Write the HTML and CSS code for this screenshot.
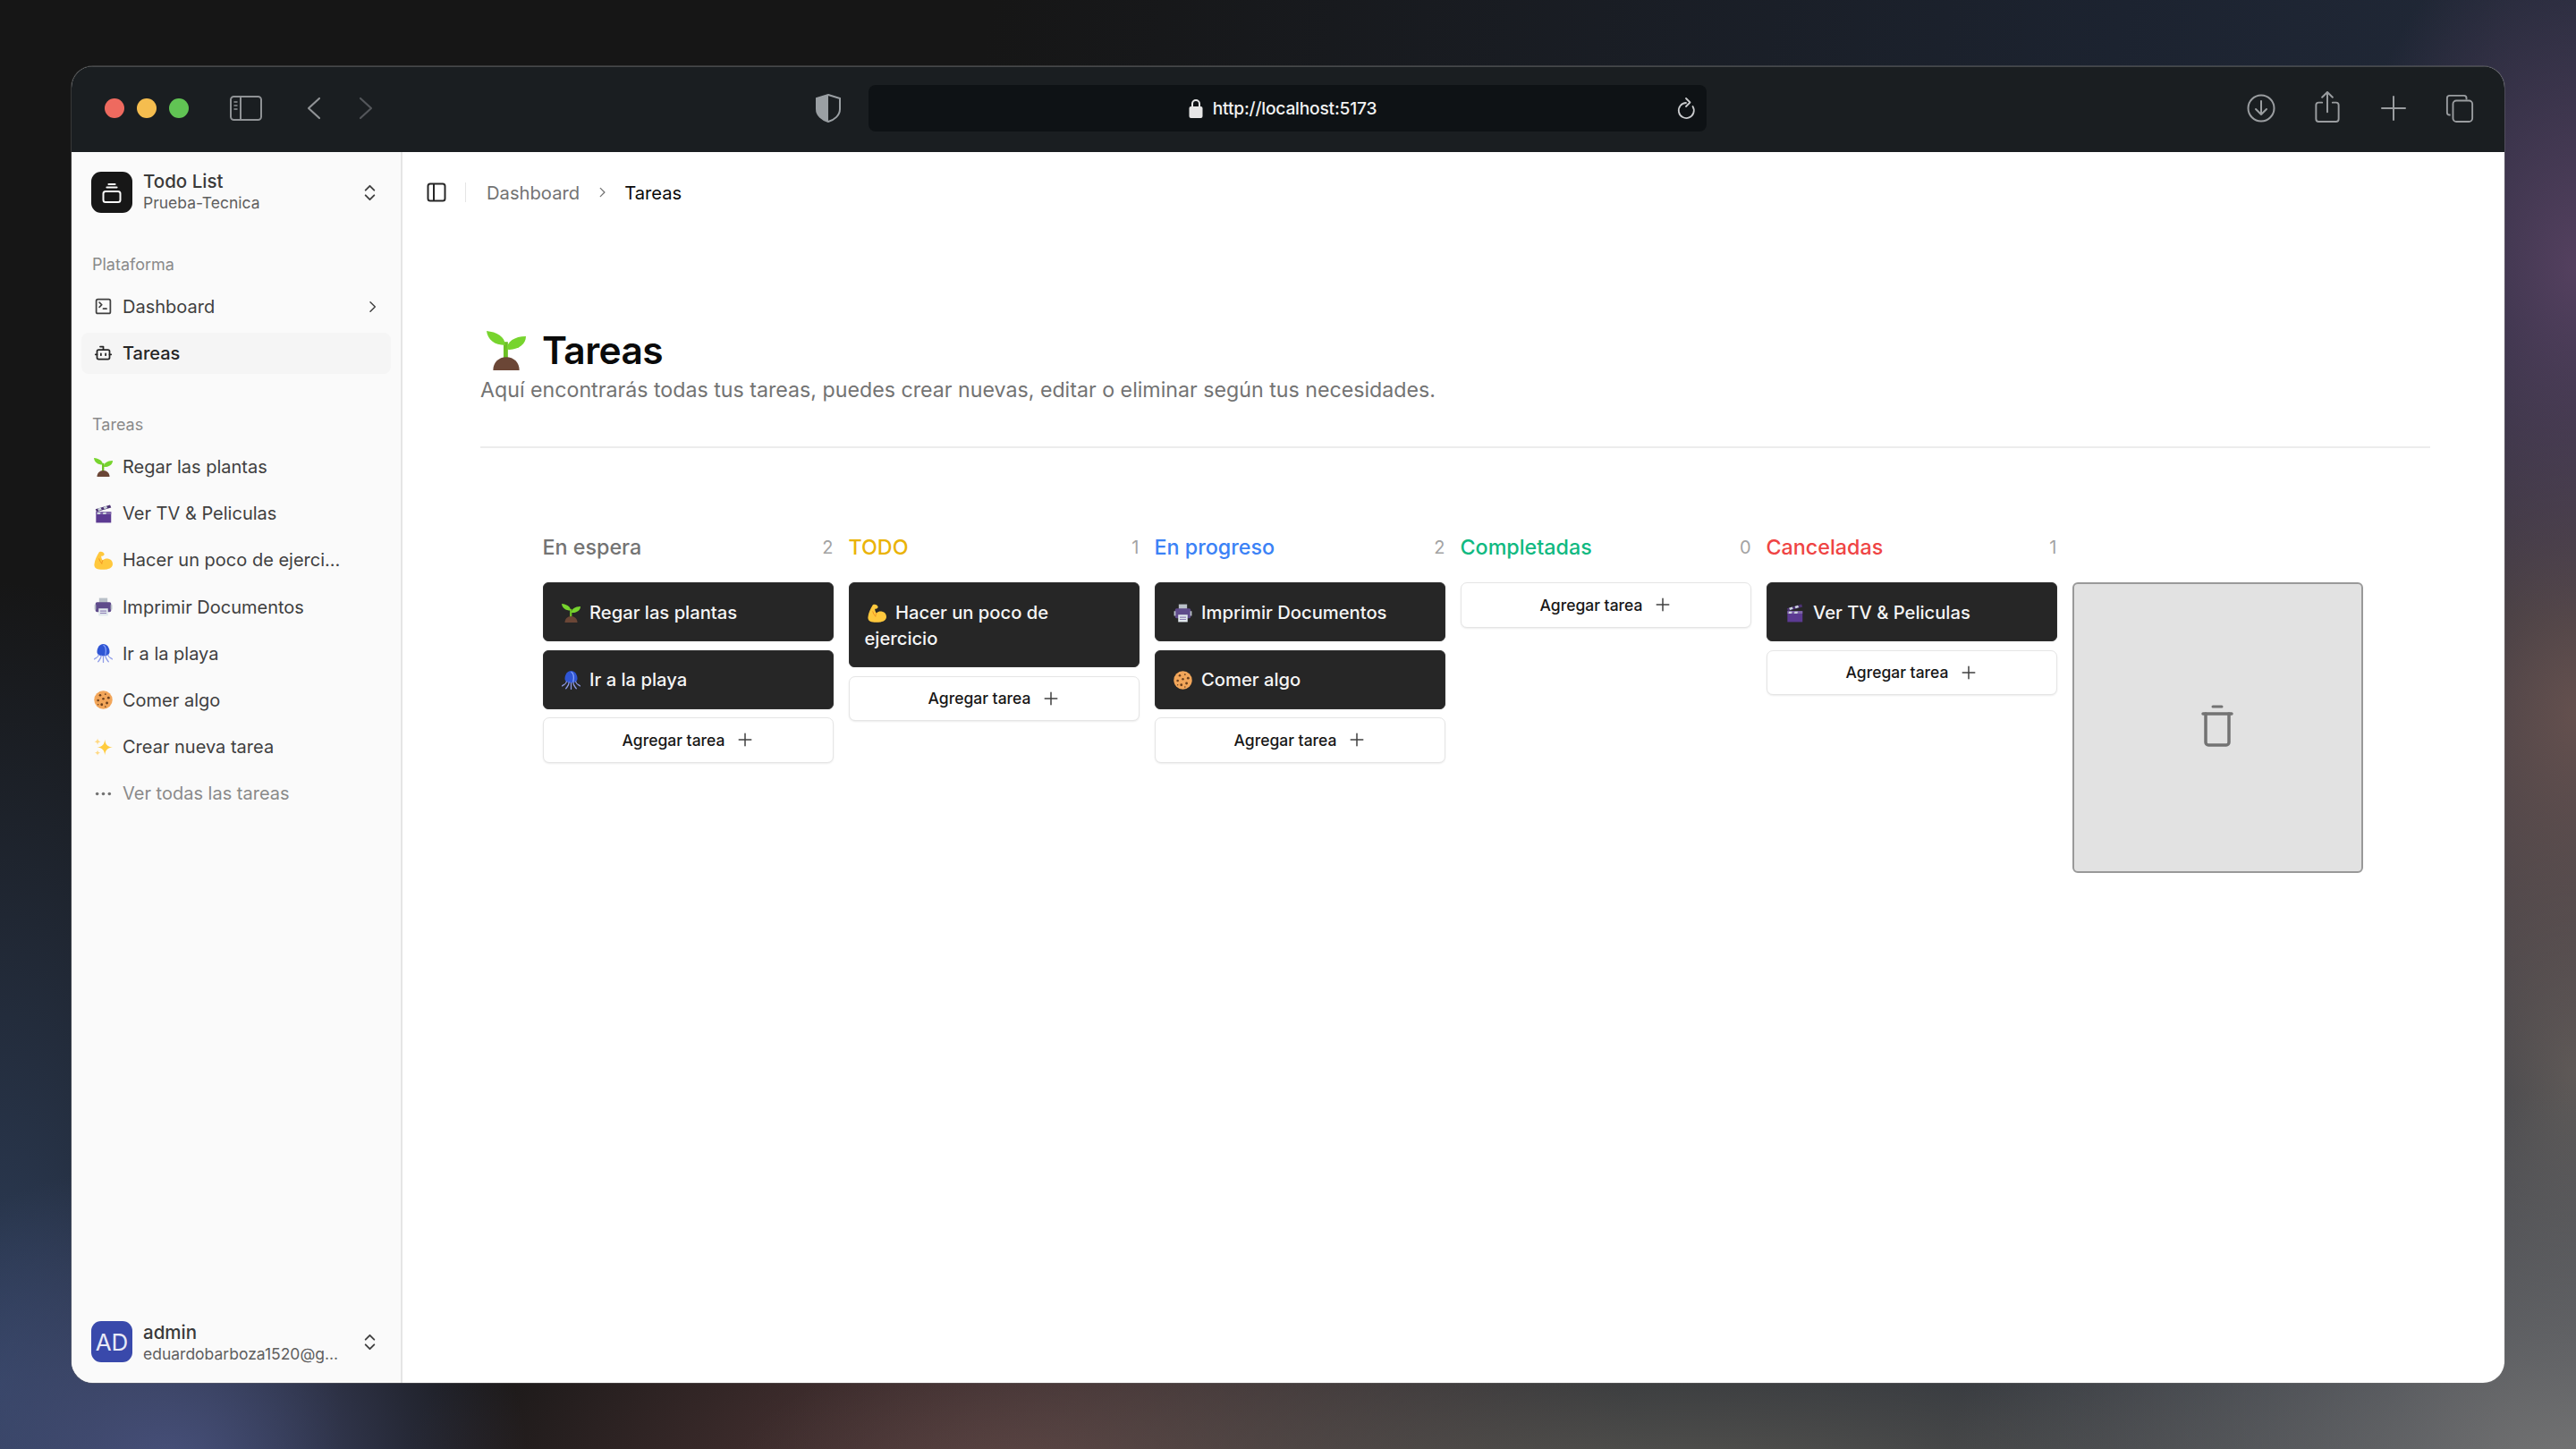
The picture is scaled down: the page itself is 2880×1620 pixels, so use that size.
FILE: index.html
```html
<!DOCTYPE html>
<html lang="es">
<head>
<meta charset="utf-8">
<title>Tareas</title>
<link rel="stylesheet" href="styles.css">
</head>
<body>
<svg class="defs" xmlns="http://www.w3.org/2000/svg">
  <symbol id="e-seed" viewBox="0 0 36 36">
    <path d="M15.500 10h4v17h-4z" fill="#6cc024"/>
    <path d="M17 13C17 5 9 1 0 0c1 8 7 13 17 13z" fill="#77d42e"/>
    <path d="M18.500 17c0-7 7-12 17.500-12 0 7-7 13-17.500 12z" fill="#77d42e"/>
    <path d="M6 36c0-7 5-12 12-12s12 5 12 12z" fill="#6b4636"/>
  </symbol>
  <symbol id="e-clap" viewBox="0 0 36 36">
    <path d="M4 14h29v21H4z" fill="#5c3a92"/>
    <path d="M4 14h29v5H4z" fill="#7f65a8"/>
    <path d="M3 9 31 1l2 5L5 14z" fill="#4b3272"/>
    <path d="M7 8l6-2 2 4-6 2zM18 5l6-2 2 4-6 2z" fill="#ccd6dd"/>
    <path d="M7 15h6l-1 4H6zM18 15h6l-1 4h-6z" fill="#ccd6dd"/>
  </symbol>
  <symbol id="e-musc" viewBox="0 0 36 36">
    <path d="M10 2c4-2 9 0 10 4 0 3-3 4-6 4 0 3 1 6 3 8 3-3 7-4 11-3 5 1 8 5 8 10 0 6-5 9-11 10-7 1-15 1-20-1-4-2-5-6-4-10C2 17 5 10 10 2z" fill="#ffc83d"/>
    <path d="M17 18c-1 2-2 4-2 6M10 15c1 3 2 6 5 9" fill="none" stroke="#f19020" stroke-width="1.600" stroke-linecap="round"/>
  </symbol>
  <symbol id="e-print" viewBox="0 0 36 36">
    <path d="M10 1h16v10H10z" fill="#b9c0c8"/>
    <rect x="3" y="9" width="30" height="19" rx="3" fill="#5f4b8b"/>
    <path d="M1 14h3v9H1zM32 14h3v9h-3z" fill="#b9c0c8"/>
    <path d="M9 21h18v14H9z" fill="#e1e8ed"/>
    <path d="M12 25h12v2H12zM12 29h12v2H12z" fill="#8f7fb5"/>
  </symbol>
  <symbol id="e-jelly" viewBox="0 0 36 36">
    <path d="M6 15C6 7 11 0 18 0s12 7 12 15c0 4-3 8-12 8S6 19 6 15z" fill="#2f55d4"/>
    <path d="M18 2c4 2 6 9 4 19" fill="none" stroke="#8aa6ff" stroke-width="2"/>
    <path d="M9 21c-1 6-6 5-8 8M14 22c0 6-3 8-6 12M18 23v12M22 22c0 6 3 8 6 12M27 21c1 6 6 5 8 8" fill="none" stroke="#8f9ce8" stroke-width="2.200" stroke-linecap="round"/>
  </symbol>
  <symbol id="e-cook" viewBox="0 0 36 36">
    <circle cx="18" cy="18" r="17.500" fill="#f2a65a"/>
    <g fill="#6b3f1d">
      <circle cx="12" cy="9" r="2.200"/><circle cx="22" cy="7" r="1.600"/><circle cx="28" cy="14" r="2.400"/><circle cx="18" cy="16" r="2.200"/><circle cx="8" cy="19" r="2.200"/><circle cx="25" cy="24" r="2.400"/><circle cx="15" cy="27" r="2.400"/><circle cx="8" cy="27" r="1.300"/><circle cx="22" cy="31" r="1.400"/>
    </g>
  </symbol>
  <symbol id="e-spark" viewBox="0 0 36 36">
    <path d="M21 3c1 10 5 14 15 15-10 1-14 5-15 15-1-10-5-14-15-15 10-1 14-5 15-15z" fill="#ffcc3e"/>
    <path d="M7 1c.7 4.300 2 5.600 6 6.300-4 .7-5.300 2-6 6.300-.7-4.300-2-5.600-6-6.300 4-.7 5.300-2 6-6.300z" fill="#ffd983"/>
    <path d="M7 23c.6 3.700 1.700 4.800 5.500 5.500-3.800.7-4.900 1.800-5.500 5.500-.6-3.700-1.700-4.800-5.500-5.500 3.800-.7 4.900-1.800 5.500-5.500z" fill="#ffd983"/>
  </symbol>
  <symbol id="i-updown" viewBox="0 0 24 24"><path d="m7 15 5 5 5-5M7 9l5-5 5 5" fill="none" stroke="currentColor" stroke-width="2" stroke-linecap="round" stroke-linejoin="round"/></symbol>
  <symbol id="i-plus" viewBox="0 0 24 24"><path d="M3 12h18M12 3v18" fill="none" stroke="currentColor" stroke-width="2" stroke-linecap="round"/></symbol>
  <symbol id="i-right" viewBox="0 0 24 24"><path d="m9 4 8 8-8 8" fill="none" stroke="currentColor" stroke-width="2.200" stroke-linecap="round" stroke-linejoin="round"/></symbol>
</svg>

<div class="window">
  <header class="toolbar">
    <div class="lights"><span class="light l-red"></span><span class="light l-yellow"></span><span class="light l-green"></span></div>
    <svg class="tb-sidebar" viewBox="0 0 36 28" fill="none" stroke="#8f9295" stroke-width="2"><rect x="1" y="1" width="34" height="26" rx="3.500"/><path d="M12 1v26"/><path d="M4.500 7h4M4.500 11h4M4.500 15h4" stroke-width="1.500"/></svg>
    <svg class="tb-back" viewBox="0 0 16 26" fill="none" stroke="#8f9295" stroke-width="2.200" stroke-linecap="round" stroke-linejoin="round"><path d="M14 2 2 13l12 11"/></svg>
    <svg class="tb-fwd" viewBox="0 0 16 26" fill="none" stroke="#53565a" stroke-width="2.200" stroke-linecap="round" stroke-linejoin="round"><path d="m2 2 12 11L2 24"/></svg>
    <svg class="tb-shield" viewBox="0 0 28 32"><path d="M14 1 27 5v12c0 7-6 12-13 14C7 29 1 24 1 17V5z" fill="#1a1e21" stroke="#9a9fa3" stroke-width="2"/><path d="M14 1 1 5v12c0 7 6 12 13 14z" fill="#9a9fa3"/></svg>
    <div class="urlbar">
      <div class="url-center">
        <svg class="lock" viewBox="0 0 16 22"><path d="M4 10V6a4 4 0 0 1 8 0v4" fill="none" stroke="#e6e6e6" stroke-width="2"/><rect x="0.500" y="9" width="15" height="13" rx="2" fill="#e6e6e6"/></svg>
        <span class="url-text">http://localhost:5173</span>
      </div>
      <svg class="reload" viewBox="0 0 22 26" fill="none" stroke="#c9cbcd" stroke-width="1.800" stroke-linecap="round" stroke-linejoin="round"><path d="M17.500 11A8.500 8.500 0 1 1 10 7"/><path d="M10 2l4.500 4.500L10 11"/></svg>
    </div>
    <div class="tb-right">
      <svg class="tb-ic" viewBox="0 0 32 32" fill="none" stroke="#9a9da0" stroke-width="2" stroke-linecap="round" stroke-linejoin="round"><circle cx="16" cy="16" r="14.500"/><path d="M16 8v15M10 17l6 6 6-6"/></svg>
      <svg class="tb-ic share" viewBox="0 0 32 36" fill="none" stroke="#9a9da0" stroke-width="2" stroke-linecap="round" stroke-linejoin="round"><path d="M10 13H6a3 3 0 0 0-3 3v16a3 3 0 0 0 3 3h20a3 3 0 0 0 3-3V16a3 3 0 0 0-3-3h-4"/><path d="M16 24V2M10 7l6-6 6 6"/></svg>
      <svg class="tb-ic" viewBox="0 0 32 32" fill="none" stroke="#9a9da0" stroke-width="2" stroke-linecap="round"><path d="M3 16h26M16 3v26"/></svg>
      <svg class="tb-ic" viewBox="0 0 34 34" fill="none" stroke="#9a9da0" stroke-width="2"><path d="M6 25H5a3 3 0 0 1-3-3V5a3 3 0 0 1 3-3h17a3 3 0 0 1 3 3v2"/><rect x="9" y="8" width="23" height="25" rx="4"/></svg>
    </div>
  </header>

  <div class="body">
    <aside class="sidebar">
      <div class="brand">
        <div class="logo"><svg viewBox="0 0 28 28" fill="none" stroke="#fafafa" stroke-width="2" stroke-linecap="round"><path d="M10.500 5h7M8.500 8.500h11" stroke-width="2.200"/><rect x="4.500" y="13" width="19" height="12" rx="2.500"/></svg></div>
        <div class="stack"><span class="name">Todo List</span><span class="sub">Prueba-Tecnica</span></div>
        <svg class="updown"><use href="#i-updown"/></svg>
      </div>

      <div class="group-label first">Plataforma</div>
      <div class="item">
        <svg class="lic" viewBox="0 0 24 24" fill="none" stroke="#404040" stroke-width="2" stroke-linecap="round" stroke-linejoin="round"><rect x="3" y="3" width="18" height="18" rx="2"/><path d="m7 7 3 3-3 3M12 15h4"/></svg>
        <span class="grow">Dashboard</span>
        <svg class="chev"><use href="#i-right"/></svg>
      </div>
      <div class="item active">
        <svg class="lic" viewBox="0 0 24 24" fill="none" stroke="#262626" stroke-width="2" stroke-linecap="round" stroke-linejoin="round"><path d="M12 8V4H8"/><rect x="4" y="8" width="16" height="12" rx="2"/><path d="M2 14h2M20 14h2M15 13v2M9 13v2"/></svg>
        <span class="grow">Tareas</span>
      </div>

      <div class="group-label second">Tareas</div>
      <div class="item task"><svg class="em"><use href="#e-seed"/></svg><span class="grow">Regar las plantas</span></div>
      <div class="item task"><svg class="em"><use href="#e-clap"/></svg><span class="grow">Ver TV &amp; Peliculas</span></div>
      <div class="item task"><svg class="em"><use href="#e-musc"/></svg><span class="grow">Hacer un poco de ejerci...</span></div>
      <div class="item task"><svg class="em"><use href="#e-print"/></svg><span class="grow">Imprimir Documentos</span></div>
      <div class="item task"><svg class="em"><use href="#e-jelly"/></svg><span class="grow">Ir a la playa</span></div>
      <div class="item task"><svg class="em"><use href="#e-cook"/></svg><span class="grow">Comer algo</span></div>
      <div class="item task"><svg class="em"><use href="#e-spark"/></svg><span class="grow">Crear nueva tarea</span></div>
      <div class="item task muted">
        <svg class="lic" viewBox="0 0 20 20" fill="#737373"><circle cx="3.500" cy="10" r="1.700"/><circle cx="10" cy="10" r="1.700"/><circle cx="16.500" cy="10" r="1.700"/></svg>
        <span class="grow">Ver todas las tareas</span>
      </div>

      <div class="user">
        <div class="avatar">AD</div>
        <div class="stack lower"><span class="name">admin</span><span class="sub">eduardobarboza1520@g...</span></div>
        <svg class="updown"><use href="#i-updown"/></svg>
      </div>
    </aside>

    <main class="main">
      <div class="crumbs">
        <svg class="toggle" viewBox="0 0 22 22" fill="none" stroke="#262626" stroke-width="2"><rect x="1.500" y="1.500" width="19" height="19" rx="2.500"/><path d="M8 1.500v19"/></svg>
        <span class="crumb-sep"></span>
        <span class="crumb">Dashboard</span>
        <svg class="crumb-chev"><use href="#i-right"/></svg>
        <span class="crumb current">Tareas</span>
      </div>

      <section class="page">
        <div class="title-row">
          <svg class="title-em"><use href="#e-seed"/></svg>
          <h1>Tareas</h1>
        </div>
        <p class="subtitle">Aquí encontrarás todas tus tareas, puedes crear nuevas, editar o eliminar según tus necesidades.</p>
        <hr class="rule">

        <div class="board">
          <div class="col">
            <div class="col-head"><span class="c-gray">En espera</span><span class="count">2</span></div>
            <div class="card"><svg class="em"><use href="#e-seed"/></svg>Regar las plantas</div>
            <div class="card"><svg class="em"><use href="#e-jelly"/></svg>Ir a la playa</div>
            <button class="add">Agregar tarea<svg class="plus"><use href="#i-plus"/></svg></button>
          </div>
          <div class="col">
            <div class="col-head"><span class="c-yellow">TODO</span><span class="count">1</span></div>
            <div class="card"><svg class="em"><use href="#e-musc"/></svg>Hacer un poco de ejercicio</div>
            <button class="add">Agregar tarea<svg class="plus"><use href="#i-plus"/></svg></button>
          </div>
          <div class="col">
            <div class="col-head"><span class="c-blue">En progreso</span><span class="count">2</span></div>
            <div class="card"><svg class="em"><use href="#e-print"/></svg>Imprimir Documentos</div>
            <div class="card"><svg class="em"><use href="#e-cook"/></svg>Comer algo</div>
            <button class="add">Agregar tarea<svg class="plus"><use href="#i-plus"/></svg></button>
          </div>
          <div class="col">
            <div class="col-head"><span class="c-teal">Completadas</span><span class="count">0</span></div>
            <button class="add">Agregar tarea<svg class="plus"><use href="#i-plus"/></svg></button>
          </div>
          <div class="col">
            <div class="col-head"><span class="c-red">Canceladas</span><span class="count">1</span></div>
            <div class="card"><svg class="em"><use href="#e-clap"/></svg>Ver TV &amp; Peliculas</div>
            <button class="add">Agregar tarea<svg class="plus"><use href="#i-plus"/></svg></button>
          </div>
          <div class="trash-col">
            <div class="trash">
              <svg viewBox="0 0 36 48" fill="none" stroke="#737373" stroke-width="3.500" stroke-linecap="round" stroke-linejoin="round"><path d="M13 2h10" stroke-width="3"/><path d="M2 10h32"/><path d="M5 10v32a3 3 0 0 0 3 3h20a3 3 0 0 0 3-3V10"/></svg>
            </div>
          </div>
        </div>
      </section>
    </main>
  </div>
</div>
</body>
</html>
```

FILE: styles.css
```css
* { box-sizing: border-box; }
html, body { margin: 0; height: 100%; }
body {
  width: 2880px;
  height: 1620px;
  padding: 74px 80px;
  overflow: hidden;
  font-family: Inter, "Noto Sans", sans-serif;
  color: #0a0a0a;
  background:
    radial-gradient(700px 420px at 100% 1640px, #747474 0, rgba(116,116,116,0) 100%),
    radial-gradient(1100px 300px at 1900px 1680px, rgba(92,90,84,.95) 0, rgba(85,80,76,0) 100%),
    radial-gradient(700px 340px at 1150px 1660px, rgba(105,68,68,.85) 0, rgba(80,50,50,0) 100%),
    radial-gradient(400px 340px at 190px 1640px, #47507a 0, rgba(60,70,110,0) 100%),
    radial-gradient(380px 900px at 0 1550px, #2e3f5c 0, rgba(40,55,85,0) 100%),
    radial-gradient(260px 400px at 2880px 300px, #54405f 0, rgba(80,60,95,0) 100%),
    radial-gradient(300px 450px at 2880px 800px, #64504e 0, rgba(90,70,70,0) 100%),
    radial-gradient(300px 500px at 2880px 1200px, #5e5a58 0, rgba(90,85,85,0) 100%),
    linear-gradient(100deg, #161616 35%, #1c2330 75%, #242c3c 100%);
}
.defs { display: none; }

.window {
  height: 1472px;
  border-radius: 24px;
  overflow: hidden;
  display: flex;
  flex-direction: column;
  background: #fff;
  box-shadow: 0 0 0 1px rgba(120,120,120,.35);
}

/* browser toolbar */
.toolbar {
  position: relative;
  height: 96px;
  flex: none;
  display: flex;
  align-items: center;
  background: #1a1e21;
  border-top: 1px solid #45484a;
  padding: 0 0 3px 37px;
}
.lights { display: flex; gap: 14px; }
.light { width: 22px; height: 22px; border-radius: 50%; }
.l-red { background: #ee6a5f; }
.l-yellow { background: #f5bd4f; }
.l-green { background: #61c454; }
.tb-sidebar { width: 36px; height: 28px; margin-left: 46px; }
.tb-back { width: 16px; height: 26px; margin-left: 50px; }
.tb-fwd { width: 16px; height: 26px; margin-left: 42px; }
.tb-shield { width: 28px; height: 32px; margin-left: 495px; }
.urlbar {
  position: relative;
  width: 937px;
  height: 52px;
  margin-left: 31px;
  border-radius: 8px;
  background: #0e1215;
  display: flex;
  align-items: center;
  justify-content: center;
}
.url-center { display: flex; align-items: center; gap: 11px; margin-left: -11px; }
.lock { width: 16px; height: 22px; }
.url-text { font-size: 19.200px; font-weight: 500; color: #f2f2f2; letter-spacing: -.2px; }
.reload { position: absolute; right: 11px; top: 13px; width: 22px; height: 26px; }
.tb-right { display: flex; align-items: center; gap: 42px; margin-left: 604px; }
.tb-ic { width: 32px; height: 32px; flex: none; }
.tb-ic.share { height: 35px; margin-top: -3px; }

/* app layout */
.body { flex: 1; display: flex; min-height: 0; }
.sidebar {
  width: 370px;
  flex: none;
  display: flex;
  flex-direction: column;
  padding: 0 11px;
  background: #fafafa;
  border-right: 2px solid #e5e5e5;
}
.brand, .user { display: flex; align-items: center; gap: 12px; padding: 0 12px 0 11px; }
.brand { margin-top: 22px; height: 46px; }
.user { margin-top: auto; margin-bottom: 23px; height: 46px; }
.logo, .avatar {
  width: 46px; height: 46px; flex: none; border-radius: 11px;
  display: flex; align-items: center; justify-content: center;
}
.logo { background: #171717; }
.logo svg { width: 28px; height: 28px; }
.avatar { background: #3949ab; color: #e8eaf6; font-size: 26px; }
.stack { display: flex; flex-direction: column; flex: 1; min-width: 0; gap: 2px; }
.stack.lower { padding-top: 3px; }
.name { font-size: 20.500px; line-height: 22px; font-weight: 500; color: #3a3a3a; }
.sub { font-size: 17.500px; line-height: 22px; color: #5f5f5f; white-space: nowrap; }
.updown { width: 23px; height: 23px; flex: none; color: #404040; }

.group-label { font-size: 18px; line-height: 22px; color: #8a8a8a; padding-left: 12px; }
.group-label.first { margin-top: 47px; margin-bottom: 12.500px; }
.group-label.second { margin-top: 40px; margin-bottom: 13.500px; }
.item {
  height: 46px;
  margin-bottom: 6px;
  display: flex;
  align-items: center;
  gap: 11px;
  padding: 0 14px;
  border-radius: 8px;
  font-size: 20px;
  color: #404040;
}
.item.task { margin-bottom: 6.200px; }
.item.active { background: #f5f5f5; color: #262626; font-weight: 500; }
.item.muted { color: #8a8a8a; }
.grow { flex: 1; min-width: 0; white-space: nowrap; }
.lic { width: 21px; height: 21px; flex: none; }
.em { width: 21px; height: 21px; flex: none; }
.chev { width: 16px; height: 16px; flex: none; color: #404040; margin-right: -1px; }

/* main */
.main { flex: 1; min-width: 0; display: flex; flex-direction: column; }
.crumbs { height: 90px; display: flex; align-items: center; padding-left: 27px; flex: none; }
.toggle { width: 22px; height: 22px; }
.crumb-sep { width: 1px; height: 22px; background: #e5e5e5; margin: 0 23px 0 21px; }
.crumb { font-size: 20.200px; color: #737373; }
.crumb.current { color: #0a0a0a; font-size: 20.200px; }
.crumb-chev { width: 14px; height: 14px; color: #737373; margin: 0 18px; }

.page { padding: 110px 83px 0 87px; }
.title-row { display: flex; align-items: center; height: 44px; padding-left: 7px; gap: 18px; }
.title-em { width: 44px; height: 44px; flex: none; }
h1 { margin: 0; font-size: 42.500px; font-weight: 600; line-height: 44px; letter-spacing: -.6px; }
.subtitle { margin: 6px 0 0; font-size: 23.200px; line-height: 32px; color: #737373; }
.rule { margin: 47px 0 0; border: 0; height: 2px; background: #ececec; }

.board {
  display: grid;
  grid-template-columns: repeat(6, 325px);
  gap: 17px;
  padding: 90.500px 0 0 69.500px;
  align-items: start;
}
.col { display: flex; flex-direction: column; gap: 9.500px; }
.col-head {
  display: flex;
  justify-content: space-between;
  align-items: center;
  height: 40px;
  margin: 0 0 10px;
  font-size: 23.300px;
  font-weight: 500;
}
.c-gray { color: #737373; }
.c-yellow { color: #eab308; }
.c-blue { color: #3b82f6; }
.c-teal { color: #10b981; }
.c-red { color: #ef4444; }
.count { font-size: 20px; font-weight: 400; color: #a3a3a3; }
.card {
  padding: 17.500px 17px;
  border-radius: 6px;
  background: #262626;
  border: 1px solid #2e2e2e;
  color: #f5f5f5;
  font-size: 20.200px;
  font-weight: 500;
  line-height: 29px;
}
.card .em { vertical-align: -4px; margin: 0 10.500px 0 3px; width: 21px; height: 21px; }
.add {
  height: 50.500px;
  display: flex;
  align-items: center;
  justify-content: center;
  gap: 14px;
  padding: 0;
  background: #fff;
  border: 1px solid #e5e5e5;
  border-radius: 7px;
  box-shadow: 0 1px 2px rgba(0,0,0,.08);
  font-family: inherit;
  font-size: 17.500px;
  font-weight: 500;
  color: #171717;
}
.plus { width: 18px; height: 18px; color: #404040; }
.trash-col { padding-top: 59.500px; }
.trash {
  height: 325px;
  display: flex;
  align-items: center;
  justify-content: center;
  background: #e2e2e2;
  border: 2px solid #999;
  border-radius: 6px;
}
.trash svg { width: 36px; height: 48px; margin-bottom: 4px; }
```
